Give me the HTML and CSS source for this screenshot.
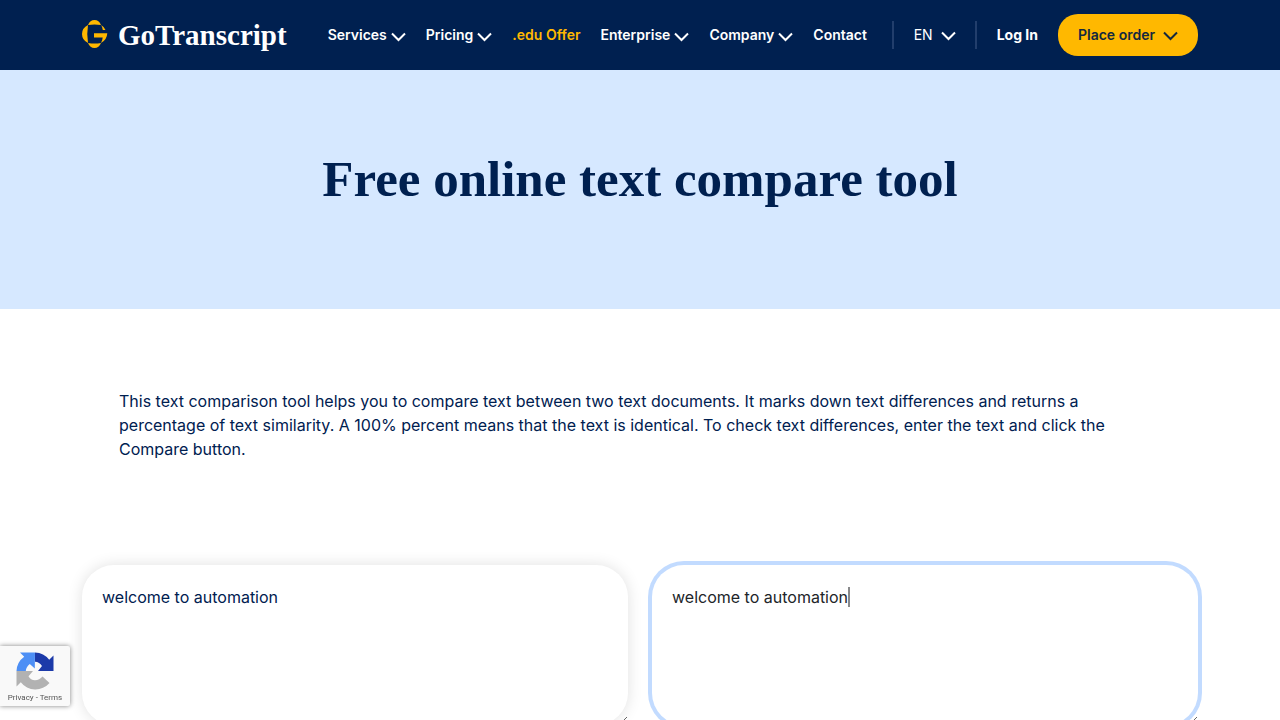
FILE: index.html
```html
<!DOCTYPE html>
<html lang="en">
<head>
<meta charset="utf-8">
<meta name="viewport" content="width=device-width, initial-scale=1">
<title>Free online text compare tool</title>
<link rel="stylesheet" href="styles.css">
</head>
<body>
<svg class="sprite" aria-hidden="true"><symbol id="chevron" viewBox="0 0 15 10"><path d="M1 1.500l6.500 6.500 6.500-6.500" fill="none" stroke="currentColor" stroke-width="2"/></symbol></svg>
<header class="header">
  <div class="container header-row">
    <a class="logo" href="#">
      <svg class="logo-mark" viewBox="0 0 26 30" aria-hidden="true">
        <g fill="#ffb800">
          <path d="M6 5Q8 0 12.500 0T19 5Q12.500 3.800 6 5z"/>
          <path d="M6 23Q8 28 12.500 28T19 23Q12.500 24.200 6 23z"/>
          <path d="M6 5Q0 8 0 14T6 23Q4.500 14 6 5z"/>
          <path d="M19 5Q22.500 7 23.500 10H20.800Q20.500 7 19 5z"/>
          <path d="M12 13.200H25.300Q25 19.500 19 23Q20.500 20 20.700 17.500H12z"/>
        </g>
      </svg>
      <span>GoTranscript</span>
    </a>
    <nav class="nav" aria-label="Main">
      <button class="nav-item" type="button">Services<svg class="chev"><use href="#chevron"/></svg></button>
      <button class="nav-item" type="button">Pricing<svg class="chev"><use href="#chevron"/></svg></button>
      <a class="nav-item offer" href="#">.edu Offer</a>
      <button class="nav-item" type="button">Enterprise<svg class="chev"><use href="#chevron"/></svg></button>
      <button class="nav-item" type="button">Company<svg class="chev"><use href="#chevron"/></svg></button>
      <a class="nav-item" href="#">Contact</a>
    </nav>
    <div class="actions">
      <button class="nav-item lang" type="button">EN<svg class="chev"><use href="#chevron"/></svg></button>
      <a class="nav-item login" href="#">Log In</a>
      <button class="order" type="button">Place order<svg class="chev"><use href="#chevron"/></svg></button>
    </div>
  </div>
</header>
<main>
  <section class="hero"><h1>Free online text compare tool</h1></section>
  <section class="container">
    <p class="intro">This text comparison tool helps you to compare text between two text documents. It marks down text differences and returns a percentage of text similarity. A 100% percent means that the text is identical. To check text differences, enter the text and click the Compare button.</p>
    <form class="compare">
      <div class="field"><textarea class="box" aria-label="First text">welcome to automation</textarea></div>
      <div class="field"><textarea class="box active" aria-label="Second text">welcome to automation</textarea><span class="caret"></span></div>
    </form>
  </section>
</main>
<aside class="captcha">
  <svg class="captcha-mark" viewBox="0 0 38 38" aria-hidden="true">
    <path fill="#1c3aa9" d="M37.500 19V3.500l-4.300 4.300A18.500 18.500 0 0 0 19 .5v9.300q4.500.2 7 4.300L22 19z"/>
    <path fill="#4d8ff5" d="M19 .5H4l4.200 4.200A18.500 18.500 0 0 0 .5 19h9.300q.3-4.200 4-7l5 4.500z"/>
    <path fill="#b2b2b2" d="M.5 19v15.500l4.300-4.300A18.500 18.500 0 0 0 33.500 31l-7-6.500q-3 3.500-7.500 3.700-4.300-.2-6.500-4l4.500-5.200z"/>
  </svg>
  <div class="captcha-links"><a href="#">Privacy</a> - <a href="#">Terms</a></div>
</aside>
</body>
</html>
```
FILE: styles.css
```css
* { box-sizing: border-box; }
html { scrollbar-width: none; }
body { margin: 0; background: #fff; color: #002050; font: 16px/24px Inter, "Liberation Sans", sans-serif; }
a { color: inherit; text-decoration: none; }
button { font: inherit; color: inherit; background: none; border: 0; padding: 0; cursor: pointer; }
.sprite { position: absolute; width: 0; height: 0; }
.container { max-width: 1140px; margin: 0 auto; padding: 0 12px; }
.header { background: #002050; color: #fff; }
.header-row { display: flex; align-items: center; min-height: 70px; }
.logo { display: flex; align-items: center; gap: 10px; margin-right: 41px; font: bold 29px/40px "Source Serif Pro", "Liberation Serif", serif; }
.logo-mark { width: 26px; height: 30px; }
.nav, .actions { display: flex; align-items: center; gap: 20px; }
.nav-item { display: flex; align-items: center; gap: 4px; font-size: 14px; line-height: 28px; font-weight: 600; white-space: nowrap; }
.offer { color: #ffb800; }
.login { font-weight: 700; }
.chev { width: 15px; height: 10px; margin-top: 4px; }
.actions { margin-left: auto; }
.lang { gap: 8px; padding: 0 19px 0 20px; border: solid #223e6c; border-width: 0 2px; font-weight: 400; }
.order { display: flex; align-items: center; gap: 8px; height: 42px; padding: 0 20px; border-radius: 20px; background: #ffb800; color: #14283f; font-size: 14px; font-weight: 600; white-space: nowrap; }
.lang .chev, .order .chev { margin-top: 2px; }
.hero { background: #d6e8ff; padding: 79px 12px 100px; text-align: center; }
h1 { margin: 0; font: bold 51px/60px "Source Serif Pro", "Liberation Serif", serif; }
.intro { margin: 80px 37px 104px; }
.compare { display: grid; grid-template-columns: 1fr 1fr; gap: 24px; margin-bottom: 80px; }
.field { position: relative; }
.box { display: block; width: 100%; height: 160px; padding: 20px; border: 0; border-radius: 32px; outline: 0; background: #fff; color: #002050; font: inherit; box-shadow: 0 0 15px rgba(0, 0, 0, .12); resize: both; }
.active { color: #212529; box-shadow: 0 0 0 4px #c2dbff; }
.caret { position: absolute; left: 196px; top: 22px; width: 2px; height: 20px; background: #88898b; }
.captcha { position: fixed; left: 0; bottom: 14px; width: 70px; height: 60px; padding-top: 6px; border-radius: 0 2px 2px 0; background: #f9f9f9; box-shadow: 0 0 5px gray; text-align: center; }
.captcha-mark { display: block; width: 38px; height: 38px; margin: 0 auto 0 16px; }
.captcha-links { color: #555; font: 8px/16px Roboto, sans-serif; white-space: nowrap; }
```
